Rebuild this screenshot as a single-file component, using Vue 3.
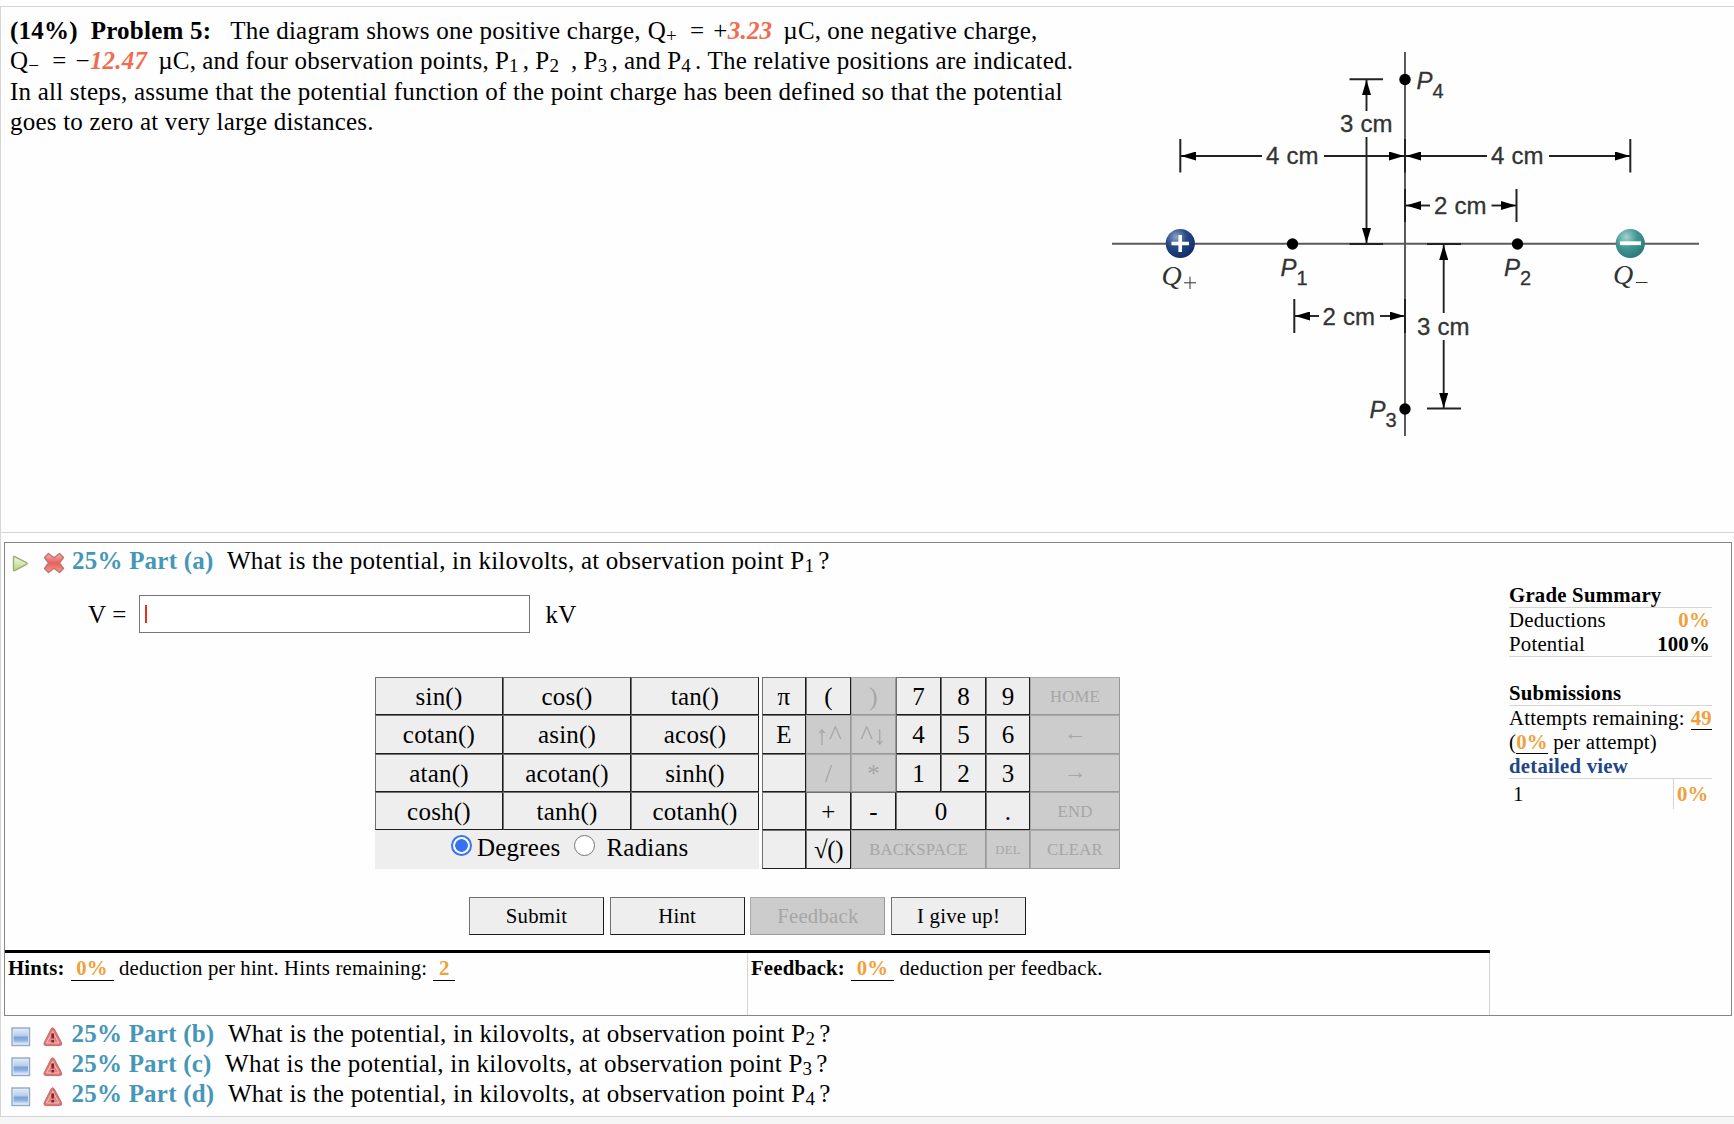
<script setup>
import { ref } from 'vue';

const answer = ref('');
const angleMode = ref('degrees');

const functionKeys = [
  'sin()', 'cos()', 'tan()',
  'cotan()', 'asin()', 'acos()',
  'atan()', 'acotan()', 'sinh()',
  'cosh()', 'tanh()', 'cotanh()',
];

// off = disabled key, span = columns taken, size = label size
const pad = [
  { label: 'π' }, { label: '(' }, { label: ')', off: true }, { label: '7' }, { label: '8' }, { label: '9' }, { label: 'HOME', off: true, size: 'small' },
  { label: 'E' }, { label: '↑^', off: true, size: 'arrow' }, { label: '^↓', off: true, size: 'arrow' }, { label: '4' }, { label: '5' }, { label: '6' }, { label: '←', off: true, size: 'move' },
  { label: '' }, { label: '/', off: true }, { label: '*', off: true }, { label: '1' }, { label: '2' }, { label: '3' }, { label: '→', off: true, size: 'move' },
  { label: '' }, { label: '+' }, { label: '-' }, { label: '0', span: 2 }, { label: '.' }, { label: 'END', off: true, size: 'small' },
  { label: '' }, { label: '√()', size: 'root' }, { label: 'BACKSPACE', off: true, span: 3, size: 'small' }, { label: 'DEL', off: true, size: 'tiny' }, { label: 'CLEAR', off: true, size: 'small' },
];

const actions = [
  { label: 'Submit' },
  { label: 'Hint' },
  { label: 'Feedback', off: true },
  { label: 'I give up!' },
];

const parts = [
  { letter: 'b', point: 2 },
  { letter: 'c', point: 3 },
  { letter: 'd', point: 4 },
];

// Diagram pieces
const dots = [[1405, 79.5], [1405, 409], [1292.5, 244], [1517.5, 244]];
const caps = [
  [1349.5, 79.3, 1383, 79.3], [1349.5, 244, 1383, 244],
  [1180.3, 139, 1180.3, 172.5], [1405, 139, 1405, 172.5], [1630.3, 139, 1630.3, 172.5],
  [1405, 189, 1405, 222], [1516.5, 189, 1516.5, 222],
  [1294.3, 299, 1294.3, 333], [1405, 299, 1405, 333],
  [1427, 244, 1461, 244], [1427, 408.5, 1461, 408.5],
];
const arrows = [
  [1366.5, 111, 1366.5, 80], [1366.5, 137, 1366.5, 243],
  [1262, 156, 1181, 156], [1324, 156, 1404, 156],
  [1487, 156, 1406, 156], [1549, 156, 1630, 156],
  [1430, 205.5, 1406, 205.5], [1491.5, 205.5, 1516, 205.5],
  [1319, 316, 1295, 316], [1380, 316, 1404.5, 316],
  [1443.7, 313, 1443.7, 245], [1443.7, 340, 1443.7, 408],
];
const lengths = [
  ['3 cm', 1340, 132], ['4 cm', 1266, 164], ['4 cm', 1491, 164],
  ['2 cm', 1434, 214], ['2 cm', 1322.5, 324.7], ['3 cm', 1417, 335],
];
const points = [
  [1, 1280.5, 276], [2, 1504, 276], [3, 1369.5, 418], [4, 1416.5, 89],
];
</script>

<template>
  <div class="page">
    <section class="problem">
      <div class="statement">
        <div class="line"><b>(14%)</b><b class="g1">Problem 5:</b><span class="g2">The diagram shows one positive charge,</span><span class="g3">Q<sub>+</sub></span><span class="g4">=</span><span class="g5">+<i>3.23</i></span><span class="g6">µC,</span><span class="g7">one negative charge,</span></div>
        <div class="line tall"><span>Q<sub>−</sub></span><span class="g4">=</span><span class="g5">−<i>12.47</i></span><span class="g6">µC,</span><span class="g7">and four observation points,</span><span class="g7">P<sub>1</sub></span><span class="c1">,</span><span class="g7">P<sub>2</sub></span><span class="c2">,</span><span class="g7">P<sub>3</sub></span><span class="c1">,</span><span class="g7">and P<sub>4</sub></span><span class="c1">.</span><span class="g7">The relative positions are indicated.</span></div>
        <div class="line">In all steps, assume that the potential function of the point charge has been defined so that the potential</div>
        <div class="line">goes to zero at very large distances.</div>
      </div>

      <svg class="diagram" viewBox="1105 45 600 400" width="600" height="400">
        <defs>
          <radialGradient id="pos" cx="0.36" cy="0.28" r="0.7">
            <stop offset="0" stop-color="#8ca3c9" />
            <stop offset="0.5" stop-color="#264a87" />
            <stop offset="1" stop-color="#14306a" />
          </radialGradient>
          <radialGradient id="neg" cx="0.36" cy="0.28" r="0.75">
            <stop offset="0" stop-color="#a5d0cf" />
            <stop offset="0.5" stop-color="#419796" />
            <stop offset="1" stop-color="#2b7878" />
          </radialGradient>
          <marker id="head" viewBox="0 0 15 9" refX="15" refY="4.5" markerWidth="15" markerHeight="9" markerUnits="userSpaceOnUse" orient="auto">
            <path d="M0 0L15 4.5L0 9Z" fill="#000" />
          </marker>
        </defs>
        <g stroke="#5a5a5a" stroke-width="2">
          <line x1="1112" y1="243.8" x2="1699" y2="243.8" />
          <line x1="1405" y1="52" x2="1405" y2="436" />
        </g>
        <line v-for="(c, i) in caps" :key="'c' + i" :x1="c[0]" :y1="c[1]" :x2="c[2]" :y2="c[3]" stroke="#222" stroke-width="2" />
        <line v-for="(a, i) in arrows" :key="'a' + i" :x1="a[0]" :y1="a[1]" :x2="a[2]" :y2="a[3]" stroke="#222" stroke-width="1.9" marker-end="url(#head)" />
        <circle v-for="(d, i) in dots" :key="'d' + i" :cx="d[0]" :cy="d[1]" r="5.7" />
        <circle cx="1180.3" cy="243.5" r="14.6" fill="url(#pos)" />
        <path d="M1171.5 243.5H1189M1180.2 235V252" stroke="#fff" stroke-width="3.6" />
        <circle cx="1630.3" cy="243.5" r="14.6" fill="url(#neg)" />
        <path d="M1620 243.2H1641" stroke="#fff" stroke-width="3.8" />
        <text v-for="(t, i) in lengths" :key="'t' + i" class="len" :x="t[1]" :y="t[2]">{{ t[0] }}</text>
        <g v-for="p in points" :key="'p' + p[0]">
          <text class="len pt" :x="p[1]" :y="p[2]">P</text>
          <text class="len idx" :x="p[1] + 16" :y="p[2] + 8.5">{{ p[0] }}</text>
        </g>
        <text class="q" x="1161.5" y="284.5">Q</text>
        <path d="M1184 282.8H1196M1190 276.6V289" stroke="#333" stroke-width="1" />
        <text class="q" x="1613" y="284">Q</text>
        <path d="M1636 282.5H1647.5" stroke="#333" stroke-width="1" />
      </svg>
    </section>

    <section class="parts">
      <div class="active-part">
        <div class="main">
          <div class="part-title first">
            <svg class="play" width="17" height="18" viewBox="0 0 17 18">
              <defs>
                <linearGradient id="green" x1="0" y1="0" x2="0" y2="1">
                  <stop offset="0" stop-color="#f4fae0" />
                  <stop offset="1" stop-color="#b5d67c" />
                </linearGradient>
              </defs>
              <path d="M1.5 2.2Q1.5 1 2.7 1.6L14.5 7.7Q15.8 8.5 14.5 9.3L2.7 15.6Q1.5 16 1.5 15Z" fill="url(#green)" stroke="#9aae78" stroke-width="1.4" />
            </svg>
            <svg class="cross" width="22" height="22" viewBox="0 0 22 22">
              <defs>
                <linearGradient id="red" x1="0" y1="0" x2="0" y2="1">
                  <stop offset="0" stop-color="#f3b4b0" />
                  <stop offset="0.5" stop-color="#e8605c" />
                  <stop offset="1" stop-color="#ef9a90" />
                </linearGradient>
              </defs>
              <path d="M5.5 1.5L11 5.8L16.5 1.5L20.5 5.5L16.4 11L20.5 16.5L16.5 20.5L11 16.2L5.5 20.5L1.5 16.5L5.6 11L1.5 5.5Z" fill="url(#red)" stroke="#bf7470" stroke-width="1.4" stroke-linejoin="round" />
            </svg>
            <b>25% Part (a)</b>
            <span class="question">What is the potential, in kilovolts, at observation point P<sub>1</sub><span class="mark">?</span></span>
          </div>

          <div class="answer">
            <span class="name">V =</span>
            <label class="field"><span class="caret"></span><input v-model="answer" type="text" /></label>
            <span class="unit">kV</span>
          </div>

          <div class="keypad">
            <div class="functions">
              <button v-for="k in functionKeys" :key="k" class="key">{{ k }}</button>
              <div class="modes">
                <span class="radio" :class="{ on: angleMode === 'degrees' }" @click="angleMode = 'degrees'"></span>
                <span class="deg">Degrees</span>
                <span class="radio" :class="{ on: angleMode === 'radians' }" @click="angleMode = 'radians'"></span>
                <span class="rad">Radians</span>
              </div>
            </div>
            <div class="numbers">
              <button v-for="(k, i) in pad" :key="i" class="key" :class="[k.size, k.span && 'span' + k.span, { off: k.off }]" :disabled="k.off">{{ k.label }}</button>
            </div>
          </div>

          <div class="actions">
            <button v-for="a in actions" :key="a.label" class="key action" :class="{ off: a.off }" :disabled="a.off">{{ a.label }}</button>
          </div>

          <div class="deductions">
            <div class="hints"><b>Hints:</b><b class="num">0%</b><span>deduction per hint. Hints remaining:</span><b class="num short">2</b></div>
            <div class="feedback"><b>Feedback:</b><b class="num">0%</b><span>deduction per feedback.</span></div>
          </div>
        </div>

        <aside class="summary">
          <b class="head">Grade Summary</b>
          <div class="pair"><span>Deductions</span><b class="orange">0%</b></div>
          <div class="pair last"><span>Potential</span><b>100%</b></div>
          <b class="head">Submissions</b>
          <div class="pair attempts"><span>Attempts remaining:</span><b class="orange under">49</b></div>
          <div class="per">(<b class="orange under">0%</b> per attempt)</div>
          <b class="detail">detailed view</b>
          <div class="try"><span>1</span><b class="orange">0%</b></div>
        </aside>
      </div>

      <div v-for="p in parts" :key="p.letter" class="part-title">
        <svg class="square" width="20" height="20" viewBox="0 0 20 20">
          <defs>
            <linearGradient id="blue" x1="0" y1="0" x2="0" y2="1">
              <stop offset="0" stop-color="#dbe7f5" />
              <stop offset="0.4" stop-color="#b9d0ec" />
              <stop offset="0.55" stop-color="#7da3d6" />
              <stop offset="0.75" stop-color="#8fb1de" />
              <stop offset="1" stop-color="#dfeafa" />
            </linearGradient>
          </defs>
          <rect x="1" y="1" width="17.5" height="17.5" fill="#e5eefa" stroke="#92a8c8" stroke-width="1.4" />
          <rect x="2.5" y="2.5" width="14.5" height="14.5" fill="url(#blue)" />
        </svg>
        <svg class="warn" width="20" height="20" viewBox="0 0 20 20">
          <path d="M8.2 1.7Q9.8 -0.2 11.2 1.7L18.6 15.8Q19.3 18.6 16.8 18.6H2.8Q0.3 18.4 1.1 15.8Z" fill="#dc7674" stroke="#c96a6a" stroke-width="1" />
          <path d="M9.7 4.2L16 16H3.4Z" fill="#dd8784" stroke="#f3c9c6" stroke-width="0.9" />
          <path d="M8.2 6.5H11.2L10.8 11.6H8.6ZM8.4 13H11V15.4H8.4Z" fill="#8c2226" />
        </svg>
        <b>25% Part ({{ p.letter }})</b>
        <span class="question">What is the potential, in kilovolts, at observation point P<sub>{{ p.point }}</sub><span class="mark">?</span></span>
      </div>
    </section>
  </div>
</template>

<style>
body {
  background: #f6f6f6;
  overflow: hidden;
}
</style>

<style scoped>
.page {
  box-sizing: border-box;
  width: 1734px;
  height: 1124px;
  padding-top: 6px;
  background: linear-gradient(#fefefe 1116px, #f6f6f6 1116px);
  font: 25px/30px "Liberation Serif", "Times New Roman", serif;
  letter-spacing: 0.22px;
  color: #000;
  overflow: hidden;
}

.problem {
  box-sizing: border-box;
  display: flex;
  justify-content: space-between;
  height: 526px;
  border-top: 1px solid #d5d5d5;
  border-left: 1px solid #d5d5d5;
}

.statement {
  padding: 9px 0 0 9px;
}

.line {
  height: 30px;
  white-space: nowrap;
}

.line.tall {
  height: 31px;
}

sub {
  font-size: 19px;
  line-height: 0;
  vertical-align: -3px;
}

i {
  color: #f06c50;
  font-weight: bold;
}

.g1 { margin-left: 13px; }
.g2 { margin-left: 19px; }
.g3 { margin-left: 7px; }
.g4 { margin-left: 13px; }
.g5 { margin-left: 9px; }
.g6 { margin-left: 11px; }
.g7 { margin-left: 6px; }
.c1 { margin-left: 4px; }
.c2 { margin-left: 12px; }

.diagram {
  margin: 38px 29px 0 0;
  flex: none;
}

.len {
  font: 24px "Liberation Sans", Arial, sans-serif;
  letter-spacing: 0.2px;
  fill: #333;
  stroke: #333;
  stroke-width: 0.3px;
}

.pt {
  font-style: italic;
}

.idx {
  font-size: 20px;
}

.q {
  font: italic 28px "Liberation Serif", serif;
  fill: #333;
}

.parts {
  box-sizing: border-box;
  height: 585px;
  padding: 9px 0 0 3px;
  border: 1px solid #d5d5d5;
  border-right: none;
}

.active-part {
  box-sizing: border-box;
  display: flex;
  width: 1728px;
  height: 474px;
  margin-bottom: 3px;
  border: 1px solid #858585;
}

.main {
  width: 1485px;
  display: flex;
  flex-direction: column;
}

.part-title {
  display: flex;
  height: 30px;
  padding-left: 7px;
  line-height: 29px;
  white-space: nowrap;
}

.part-title b {
  color: #4697b7;
}

.part-title.first {
  margin-top: 3px;
}

.play { margin: 9px 14px 0 0; }
.cross { margin: 6px 7px 0 0; }
.square { margin: 8px 12px 0 0; }
.warn { margin: 8px 8.5px 0 0; }

.question {
  margin-left: 13.5px;
}

.mark {
  margin-left: 4px;
}

.answer {
  display: flex;
  align-items: center;
  margin: 19px 0 0 83px;
}

.name {
  width: 42px;
  padding-top: 1px;
}

.unit {
  padding-top: 1px;
}

.field {
  box-sizing: border-box;
  display: flex;
  align-items: center;
  width: 391px;
  height: 38px;
  margin: 0 16px 0 8.5px;
  padding-left: 5px;
  border: 1px solid #767676;
  background: #fff;
}

.caret {
  width: 2px;
  height: 18px;
  background: #e8301c;
}

.field input {
  flex: 1;
  min-width: 0;
  border: none;
  outline: none;
  background: none;
  font: inherit;
}

.keypad {
  display: flex;
  gap: 3px;
  margin: 44px 0 0 370px;
}

.functions,
.numbers {
  display: grid;
  grid-template-rows: 38px 39px 38px 38px 39px;
}

.functions {
  grid-template-columns: repeat(3, 128px);
  background: #eee;
}

.numbers {
  grid-template-columns: 44px 45px 45px 45px 45px 44px 90px;
}

.key {
  margin: 0;
  padding: 1px 0 0;
  border: 1px solid;
  border-color: #707070 #1c1c1c #1c1c1c #707070;
  border-radius: 0;
  background: #eee;
  color: #000;
  font: inherit;
  letter-spacing: inherit;
  line-height: 30px;
  white-space: nowrap;
}

.key.off {
  border-color: #a9a9a9 #999 #999 #a9a9a9;
  background: #ccc;
  color: #a6a6a6;
}

.span2 { grid-column: span 2; }
.span3 { grid-column: span 3; }
.key.small { font-size: 16.7px; }
.key.tiny { font-size: 12.7px; }
.key.move { font-size: 23px; padding: 0 0 3px; }
.key.arrow { font-size: 27px; }
.key.root { letter-spacing: -0.4px; }

.modes {
  grid-column: span 3;
  display: flex;
  align-items: flex-start;
  padding: 3px 0 0 76px;
}

.radio {
  box-sizing: border-box;
  width: 21px;
  height: 21px;
  margin-top: 2px;
  border: 1.5px solid #767676;
  border-radius: 50%;
  background: #fff;
}

.radio.on {
  border: 2px solid #3573f6;
  background: radial-gradient(#3573f6 6px, #fff 6.6px);
}

.deg { margin: 0 14px 0 5px; }
.rad { margin-left: 11px; }

.actions {
  display: flex;
  gap: 5.7px;
  margin: 28px 0 0 464px;
}

.action {
  width: 135px;
  height: 38px;
  padding: 0;
  font-size: 20.8px;
}

.deductions {
  display: flex;
  flex: 1;
  margin-top: 15px;
  border-top: 3px solid #000;
  font-size: 20.8px;
  line-height: 30px;
  letter-spacing: 0.17px;
}

.hints,
.feedback {
  box-sizing: border-box;
  display: flex;
  align-items: flex-start;
  border-right: 1px solid #d5d5d5;
  padding-left: 3px;
}

.hints { width: 743px; }
.feedback { flex: 1; }

.num {
  box-sizing: border-box;
  width: 43px;
  height: 28px;
  margin: 0 5.5px 0 6px;
  border-bottom: 1px solid #000;
  color: #f0a03c;
  text-align: center;
}

.num.short {
  width: 22px;
}

.summary {
  display: flex;
  flex-direction: column;
  width: 203px;
  margin: 40px 0 0 19px;
  font-size: 20.8px;
  line-height: 24px;
  white-space: nowrap;
}

.head {
  height: 24px;
  border-bottom: 1px solid #d5d5d5;
}

.pair {
  display: flex;
  justify-content: space-between;
  height: 24px;
  padding-right: 2px;
}

.pair.last {
  border-bottom: 1px solid #d5d5d5;
  margin-bottom: 24px;
}

.pair.attempts {
  padding: 0;
}

.orange {
  color: #f0a03c;
}

.under {
  border-bottom: 1px solid #000;
}

.detail {
  color: #1f4788;
  border-bottom: 1px solid #d5d5d5;
}

.try {
  display: flex;
  justify-content: space-between;
  height: 30px;
  line-height: 30px;
  padding-left: 4px;
}

.try .orange {
  width: 39px;
  border-left: 1px solid #d5d5d5;
  padding-left: 3px;
  box-sizing: border-box;
}
</style>
